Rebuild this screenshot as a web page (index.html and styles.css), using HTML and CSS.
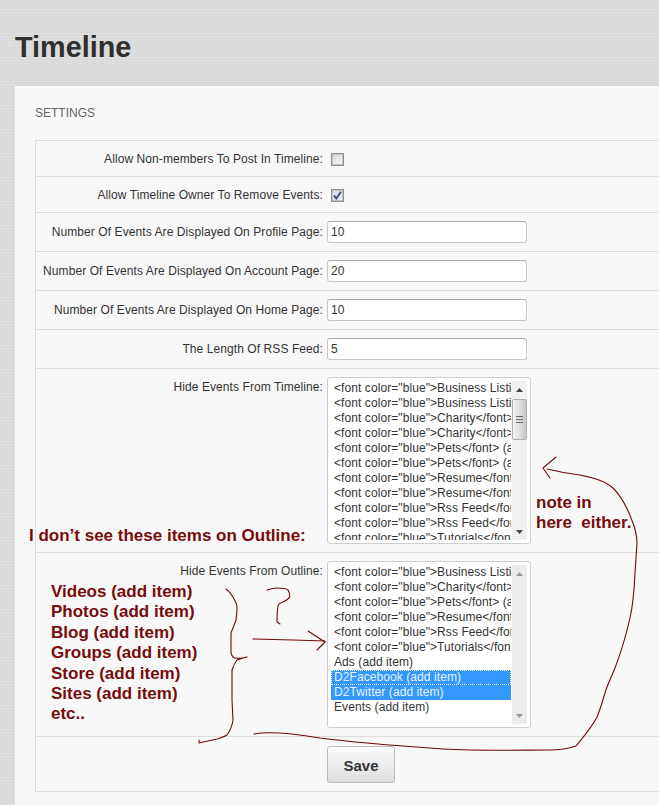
FILE: index.html
```html
<!DOCTYPE html>
<html lang="en">
<head>
<meta charset="utf-8">
<title>Timeline</title>
<link rel="stylesheet" href="styles.css">
</head>
<body>
<h1 class="title">Timeline</h1>
<main class="card">
  <h2 class="card-title">SETTINGS</h2>
  <form class="table">
    <div class="row row-check">
      <label class="label">Allow Non-members To Post In Timeline:</label>
      <span class="check"></span>
    </div>
    <div class="row row-check">
      <label class="label">Allow Timeline Owner To Remove Events:</label>
      <span class="check check-on"><svg class="tick" viewBox="0 0 9 9" width="9" height="9"><path d="M1 4.5 L3.3 7.5 L8 0.8" fill="none" stroke="#3d4f96" stroke-width="2"/></svg></span>
    </div>
    <div class="row row-input">
      <label class="label">Number Of Events Are Displayed On Profile Page:</label>
      <input class="text" type="text" value="10">
    </div>
    <div class="row row-input">
      <label class="label">Number Of Events Are Displayed On Account Page:</label>
      <input class="text" type="text" value="20">
    </div>
    <div class="row row-input">
      <label class="label">Number Of Events Are Displayed On Home Page:</label>
      <input class="text" type="text" value="10">
    </div>
    <div class="row row-input">
      <label class="label">The Length Of RSS Feed:</label>
      <input class="text" type="text" value="5">
    </div>
    <div class="row row-list">
      <label class="label">Hide Events From Timeline:</label>
      <div class="list">
        <div class="options">
          <div class="opt">&lt;font color="blue"&gt;Business Listings&lt;/font&gt;</div>
          <div class="opt">&lt;font color="blue"&gt;Business Listings&lt;/font&gt;</div>
          <div class="opt">&lt;font color="blue"&gt;Charity&lt;/font&gt; (add</div>
          <div class="opt">&lt;font color="blue"&gt;Charity&lt;/font&gt; (add</div>
          <div class="opt">&lt;font color="blue"&gt;Pets&lt;/font&gt; (add item)</div>
          <div class="opt">&lt;font color="blue"&gt;Pets&lt;/font&gt; (add item)</div>
          <div class="opt">&lt;font color="blue"&gt;Resume&lt;/font&gt; (add</div>
          <div class="opt">&lt;font color="blue"&gt;Resume&lt;/font&gt; (add</div>
          <div class="opt">&lt;font color="blue"&gt;Rss Feed&lt;/font&gt; (add</div>
          <div class="opt">&lt;font color="blue"&gt;Rss Feed&lt;/font&gt; (add</div>
          <div class="opt">&lt;font color="blue"&gt;Tutorials&lt;/font&gt; (add</div>
        </div>
        <div class="scroll">
          <svg class="arrow" viewBox="0 0 7 4" width="7" height="4"><path d="M0 4 L3.5 0 L7 4Z" fill="#444"/></svg>
          <div class="thumb"><span class="grip"></span><span class="grip"></span><span class="grip"></span></div>
          <svg class="arrow arrow-end" viewBox="0 0 7 4" width="7" height="4"><path d="M0 0 L3.5 4 L7 0Z" fill="#444"/></svg>
        </div>
      </div>
    </div>
    <div class="row row-list">
      <label class="label">Hide Events From Outline:</label>
      <div class="list">
        <div class="options">
          <div class="opt">&lt;font color="blue"&gt;Business Listings&lt;/font&gt;</div>
          <div class="opt">&lt;font color="blue"&gt;Charity&lt;/font&gt; (add</div>
          <div class="opt">&lt;font color="blue"&gt;Pets&lt;/font&gt; (add item)</div>
          <div class="opt">&lt;font color="blue"&gt;Resume&lt;/font&gt; (add</div>
          <div class="opt">&lt;font color="blue"&gt;Rss Feed&lt;/font&gt; (add</div>
          <div class="opt">&lt;font color="blue"&gt;Tutorials&lt;/font&gt; (add</div>
          <div class="opt">Ads (add item)</div>
          <div class="opt opt-on opt-focus">D2Facebook (add item)</div>
          <div class="opt opt-on">D2Twitter (add item)</div>
          <div class="opt">Events (add item)</div>
        </div>
        <div class="scroll scroll-idle">
          <svg class="arrow" viewBox="0 0 7 4" width="7" height="4"><path d="M0 4 L3.5 0 L7 4Z" fill="#9a9a9a"/></svg>
          <svg class="arrow arrow-end" viewBox="0 0 7 4" width="7" height="4"><path d="M0 0 L3.5 4 L7 0Z" fill="#9a9a9a"/></svg>
        </div>
      </div>
    </div>
    <div class="row row-save">
      <button class="save" type="button">Save</button>
    </div>
  </form>
</main>

<div class="note note-head">I don’t see these items on Outline:</div>
<div class="note note-side">note in<br>here&nbsp; either.</div>
<ul class="note note-list">
  <li>Videos (add item)</li>
  <li>Photos (add item)</li>
  <li>Blog (add item)</li>
  <li>Groups (add item)</li>
  <li>Store (add item)</li>
  <li>Sites (add item)</li>
  <li>etc..</li>
</ul>
<svg class="ink" viewBox="0 0 659 805" width="659" height="805" aria-hidden="true">
  <g fill="none" stroke="#720808" stroke-width="1.1" stroke-linejoin="round" stroke-linecap="round">
    <path d="M254 734 C270 731 290 733 320 738 C350 742 400 746 443 749 C480 751 520 750 550 750 C560 750 570 748 576 746 C585 735 592 727 597 717 C602 705 604 695 607 687 C611 677 613 673 615 668 C620 655 625 640 630 618 C633 605 634 595 635 573 L637 543 C637 535 634 525 631 518 C626 505 620 495 613 488 C606 482 600 480 593 478 C585 476 575 474 567 473 C560 472 553 470 547 469"/>
    <path d="M556 457 L543 468 L550 478"/>
    <path d="M226 589 C230 592 232 595 233 597 C236 602 237 605 237 608 C237 615 236 618 236 620 C234 626 232 630 231 633 L231 653 C232 656 233 658 235 658 C240 659 244 658 247 657 C243 658 240 659 237 660 C234 664 233 667 232 670 L232 700 L233 720 C232 727 230 731 227 735 C224 737 220 738 217 739 L199 743 L199 740"/>
    <path d="M267 590 C270 589 274 588 277 588 C282 588 286 588 288 590 C290 594 290 597 289 598 C287 600 285 601 283 602 C280 603 278 604 278 606 C277 612 277 618 277 622 L280 624"/>
    <path d="M253 639 L293 640 L325 641"/>
    <path d="M308 631 L325 642 L317 650"/>
  </g>
</svg>
</body>
</html>
```

FILE: styles.css
```css
* { box-sizing: border-box; }

html, body { height: 100%; }

body {
  margin: 0;
  height: 805px;
  overflow: hidden;
  position: relative;
  padding: 0 0 0 15px;
  font-family: "Liberation Sans", Arial, sans-serif;
  font-size: 12px;
  color: #333;
  background-color: #dcdcdc;
  background-image:
    repeating-linear-gradient(0deg, rgba(255,255,255,.07) 0 1px, rgba(0,0,0,.015) 1px 2px, transparent 2px 3px),
    repeating-linear-gradient(90deg, rgba(255,255,255,.05) 0 1px, rgba(0,0,0,.012) 1px 2px);
}

.title {
  margin: 0;
  height: 85px;
  padding-top: 29px;
  font-size: 28.8px;
  line-height: 36px;
  font-weight: 700;
  color: #2f2f2f;
}

.card {
  width: 700px;
  height: 760px;
  padding: 0 0 0 20px;
  background: #f8f8f8;
  border-top: 1px solid #d6d6d6;
}

.card-title {
  margin: 0;
  height: 54px;
  padding-top: 20px;
  font-size: 12px;
  line-height: 14px;
  font-weight: 400;
  color: #666;
}

.table {
  display: block;
  width: 680px;
  border: 1px solid #dcdcdc;
  border-right: 0;
}

.row {
  display: flex;
  align-items: flex-start;
  border-bottom: 1px solid #dcdcdc;
}
.row:last-child { border-bottom: 0; }

.row-check { height: 36px; padding-top: 11px; }
.row-input { height: 39px; padding-top: 8px; }
.row-list  { height: 184px; padding-top: 8px; }
.row-save  { height: 54px; padding: 9px 0 0 291px; }

.label {
  flex: none;
  width: 287px;
  text-align: right;
  line-height: 15px;
  letter-spacing: .08px;
  color: #333;
}
.row-input .label { padding-top: 4px; }
.row-list .label { padding-top: 3px; }

.check {
  flex: none;
  width: 13px;
  height: 13px;
  margin: 1px 0 0 8px;
  border: 1px solid #8e8f8f;
  background: linear-gradient(135deg, #d8d8d8, #f8f8f8);
  box-shadow: inset 0 0 0 1px #c4c4c4;
  display: flex;
  align-items: center;
  justify-content: center;
}
.check-on { background: linear-gradient(135deg, #d6d8e6, #f2f2f8); }

.text {
  flex: none;
  width: 200px;
  height: 22px;
  margin: 0 0 0 4px;
  padding: 0 3px;
  border: 1px solid #c8c8c8;
  border-top-color: #a9a9a9;
  border-radius: 3px;
  background: #fff;
  font: 12px "Liberation Sans", Arial, sans-serif;
  color: #333;
}

.list {
  flex: none;
  display: flex;
  gap: 1px;
  width: 204px;
  height: 167px;
  margin-left: 4px;
  padding: 3px;
  border: 1px solid #cfcfcf;
  border-radius: 3px;
  background: #fff;
}

.options {
  flex: 1;
  min-width: 0;
  overflow: hidden;
}

.opt {
  height: 15px;
  padding-left: 3px;
  line-height: 15px;
  letter-spacing: .08px;
  white-space: nowrap;
  overflow: hidden;
  color: #333;
}
.opt-on { background: #3399ff; color: #e8f2ff; }
.opt-focus { outline: 1px dotted #fff; outline-offset: -1px; }

.scroll {
  flex: none;
  width: 15px;
  display: flex;
  flex-direction: column;
  align-items: center;
  padding-top: 7px;
  background: #f0f0f0;
}
.scroll-idle { background: #ececec; }

.arrow { flex: none; }
.arrow-end { margin-top: auto; margin-bottom: 6px; }

.thumb {
  width: 15px;
  height: 41px;
  margin-top: 7px;
  border: 1px solid #aeb0b3;
  border-radius: 2px;
  background: linear-gradient(90deg, #f4f4f4, #dcdcdc 60%, #c4c4c4);
  display: flex;
  flex-direction: column;
  align-items: center;
  justify-content: center;
  gap: 2px;
}
.grip { display: block; width: 7px; height: 1px; background: #666; }

.save {
  width: 68px;
  height: 37px;
  padding: 2px 0 0;
  border: 1px solid #bdbdbd;
  border-radius: 3px;
  background: linear-gradient(#fbfbfb, #dedede);
  font: 700 15px "Liberation Sans", Arial, sans-serif;
  color: #333;
}

.note {
  position: absolute;
  margin: 0;
  font-family: "Liberation Sans", Arial, sans-serif;
  font-weight: 700;
  font-size: 17px;
  color: #770c0c;
  white-space: nowrap;
}
.note-head { left: 29px; top: 526px; line-height: 19px; }
.note-side { left: 536px; top: 493px; line-height: 20px; }
.note-list {
  left: 51px;
  top: 582px;
  padding: 0;
  list-style: none;
  line-height: 20.4px;
}

.ink { position: absolute; left: 0; top: 0; pointer-events: none; }
```
